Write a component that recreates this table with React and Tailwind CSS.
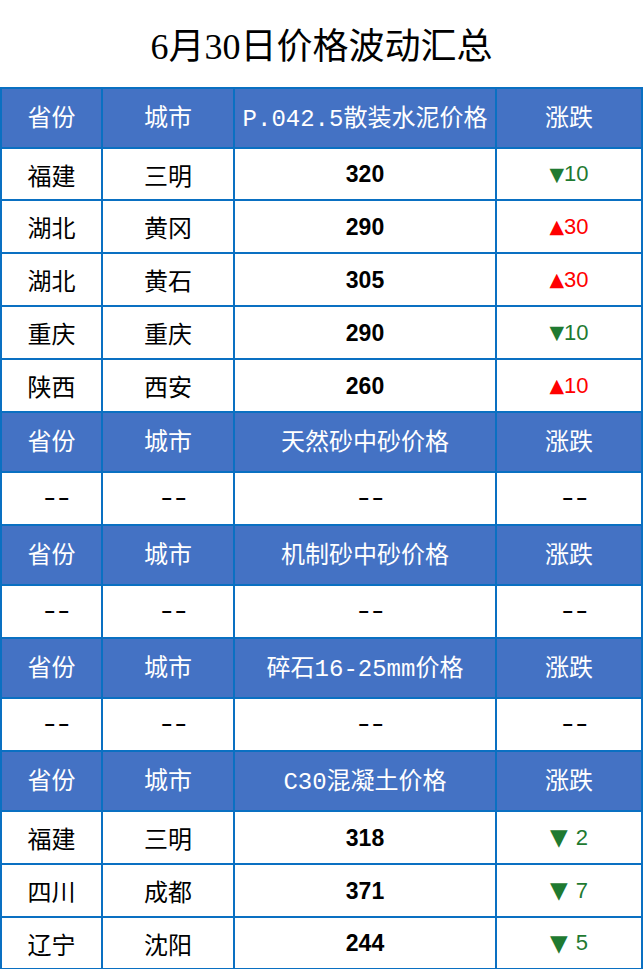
import React from "react";

const CJK = "font-['Liberation_Serif','Noto_Sans_CJK_SC',serif]";
const MONO = "font-['Liberation_Mono','Noto_Sans_CJK_SC',monospace]";
const COLS = "grid grid-cols-[99px_130px_260px_144px] gap-[2px]";

function Header({ title }) {
  const cell = `bg-[#4472C4] flex items-center justify-center pt-[4px] text-white text-[24px] leading-none ${MONO}`;
  return (
    <div className={`${COLS} h-[58px]`}>
      <div className={cell}>省份</div>
      <div className={cell}>城市</div>
      <div className={cell}>{title}</div>
      <div className={cell}>涨跌</div>
    </div>
  );
}

function Change({ dir, v, big }) {
  const up = dir === "up";
  return (
    <span
      className={`flex items-center font-['Liberation_Sans',sans-serif] text-[22px] leading-none ${
        up ? "text-[#ff0000]" : "text-[#1f7a31]"
      }`}
    >
      <span
        className={`font-['DejaVu_Sans',sans-serif] leading-none ${
          big ? "text-[23px] mr-[8px]" : "text-[19px]"
        }`}
      >
        {up ? "▲" : "▼"}
      </span>
      {v}
    </span>
  );
}

function Row({ p, c, price, dir, v, big, h = "h-[51px]" }) {
  const cell = "bg-white flex items-center justify-center";
  return (
    <div className={`${COLS} ${h}`}>
      <div className={`${cell} pt-[5px] ${CJK} text-[24px] text-black leading-none`}>{p}</div>
      <div className={`${cell} pt-[5px] ${CJK} text-[24px] text-black leading-none`}>{c}</div>
      <div className={`${cell} pt-[1px] font-['Liberation_Sans',sans-serif] font-bold text-[23px] text-black leading-none`}>
        {price}
      </div>
      <div className={cell}>
        <Change dir={dir} v={v} big={big} />
      </div>
    </div>
  );
}

function EmptyRow() {
  const cell = "bg-white flex items-center justify-center";
  const dash = "inline-block pl-[4px] text-black text-[24px] tracking-[-4px] scale-x-[1.35] leading-none font-['Liberation_Mono',monospace]";
  return (
    <div className={`${COLS} h-[51px]`}>
      <div className={cell}><span className={dash}>--</span></div>
      <div className={cell}><span className={dash}>--</span></div>
      <div className={cell}><span className={dash}>--</span></div>
      <div className={cell}><span className={dash}>--</span></div>
    </div>
  );
}

export default function App() {
  return (
    <div className="w-[643px] h-[969px] bg-white overflow-hidden">
      <div className="h-[87px] flex items-center justify-center pt-[6px]">
        <h1 className={`${CJK} text-[36px] leading-none text-black font-normal`}>
          6月30日价格波动汇总
        </h1>
      </div>
      <div className="bg-[#0a70c2] p-[2px] flex flex-col gap-[2px]">
        <Header title="P.042.5散装水泥价格" />
        <Row p="福建" c="三明" price="320" dir="down" v="10" h="h-[50px]" />
        <Row p="湖北" c="黄冈" price="290" dir="up" v="30" />
        <Row p="湖北" c="黄石" price="305" dir="up" v="30" />
        <Row p="重庆" c="重庆" price="290" dir="down" v="10" />
        <Row p="陕西" c="西安" price="260" dir="up" v="10" />
        <Header title="天然砂中砂价格" />
        <EmptyRow />
        <Header title="机制砂中砂价格" />
        <EmptyRow />
        <Header title="碎石16-25mm价格" />
        <EmptyRow />
        <Header title="C30混凝土价格" />
        <Row p="福建" c="三明" price="318" dir="down" v="2" big />
        <Row p="四川" c="成都" price="371" dir="down" v="7" big />
        <Row p="辽宁" c="沈阳" price="244" dir="down" v="5" big h="h-[50px]" />
      </div>
    </div>
  );
}
